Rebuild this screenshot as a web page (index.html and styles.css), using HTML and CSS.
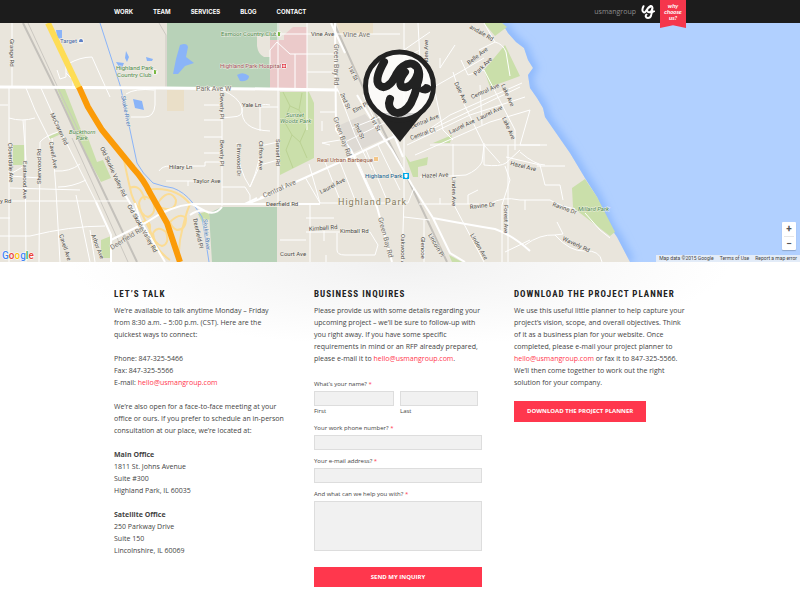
FILE: index.html
```html
<!DOCTYPE html>
<html lang="en">
<head>
<meta charset="utf-8">
<meta name="viewport" content="width=device-width, initial-scale=1">
<title>Contact – usmangroup</title>
<link rel="stylesheet" href="styles.css">
</head>
<body>
<header class="top">
  <div class="wrap top-row">
    <nav class="nav" aria-label="Main">
      <a href="#">WORK</a><a href="#">TEAM</a><a href="#">SERVICES</a><a href="#">BLOG</a><a href="#">CONTACT</a>
    </nav>
    <div class="brand">
      <a class="brand-name" href="#">usmangroup</a>
      <svg class="brand-mark" viewBox="0 0 14 16" aria-hidden="true">
        <path d="M2.500 2.200C1 5 .9 8 3 8.400C5.500 9 6 3 9.500 2C12.500 1.500 12 7.500 8.500 8.300C5 8.500 5.600 3.500 9.200 3M11 5C11 9 10.500 14 7 14C4.500 14 4.200 11.500 5.500 10.500M9 8.300C11 8.300 12 8 13 7.300"/>
      </svg>
      <a class="ribbon" href="#">why<br>choose<br>us?</a>
    </div>
  </div>
</header>

<section class="map" aria-label="Office location map">
  <svg class="map-art" viewBox="0 23 800 239" preserveAspectRatio="xMidYMin slice">
    <defs>
      <filter id="shore" x="-20%" y="-20%" width="140%" height="140%"><feGaussianBlur stdDeviation="4"/></filter>
      <clipPath id="sea"><path d="M502 23L508 33L516 42L524 48L528 60L533 68L528 75L530 88L537 98L543 108L545 117L554 130L570 153L585 178L597 197L610 227L617 237L630 262H800V23Z"/></clipPath>
    </defs>
    <rect class="land" y="23" width="800" height="239"/>
    <!-- water -->
    <g clip-path="url(#sea)">
      <rect class="water" x="495" y="23" width="305" height="239"/>
      <path class="shore" filter="url(#shore)" d="M502 23L508 33L516 42L524 48L528 60L533 68L528 75L530 88L537 98L543 108L545 117L554 130L570 153L585 178L597 197L610 227L617 237L630 262"/>
    </g>
    <!-- parks and grounds -->
    <path class="golf" d="M167 23H279V40H270V88H167ZM222 207H277V262H212L209 213Z"/>
    <path class="land" d="M257 36H270V57H264Q258 54 257 46Z"/>
    <path class="pink" d="M270 40H284V35L293 27H307V88H270Z"/>
    <path class="tan" d="M167 90H184V111H167ZM337 23H373V34H340Z"/>
    <path class="grey" d="M340 125L365 114L386 138L348 155Z"/>
    <path class="park" d="M57 89H65L81 130L88 138L97 162L103 160L111 178L101 182L80 143ZM13 145H24V165H13ZM48 137L59 132L61 134L50 139ZM101 240L111 236V258H101ZM198 214L208 211L210 219L202 222ZM280 92H309L314 103V158L280 175ZM484 23H502L507 27L495 36ZM505 45L520 76L490 87L484 70ZM405 155L410 162L428 157L427 165L418 167V177H413ZM433 143L452 135L450 143ZM585 179L572 188L573 207L580 213L610 236L615 232L597 197ZM449 255L462 262H452Z"/>
    <path class="trail" d="M283 92L290 106L284 121L292 135L286 150L293 168M302 93L299 110L308 124L300 142L307 158M290 106L299 110M292 135L300 142"/>
    <path class="pond" d="M56 30H62L62 38Q58 40 57 36ZM126 51L129 57L127 62L125 58ZM116 62L124 63L121 70ZM146 57L153 59L152 61L147 61ZM180 45Q187 42 188 47L186 57L194 63L185 66L178 74L173 74L176 59ZM237 75Q243 71 249 76Q249 82 240 81ZM133 99L142 101L144 110L135 108Z"/>
    <path class="river" d="M100 23L120 85L130 130L137 163Q142 173 153 183Q165 187 173 188Q184 192 192 202L202 217L209 262"/>
    <!-- railways -->
    <path class="rail" d="M23 23L55 88L78 138L137 262M334 23L355 70L383 130L407 177L447 262"/>
    <path class="rail thin" d="M72 138L128 262M28 23L58 88L82 138M159 23L166 35V88"/>
    <!-- small streets -->
    <path class="st" d="M12 23V87M9 87V262M0 105H8M9 118Q22 122 35 118M26 88L35 110L50 140M23 120L26 160M41 88L58 126L96 202L111 235M40 142L39 262M40 142Q45 136 58 132M25 120L26 262M0 201H130M0 218H10M0 236H30Q70 226 105 226M52 138L56 190L60 262M55 171Q70 172 80 164M58 187Q72 187 86 180M26 165L12 173M10 176L40 178M10 188L80 190M76 195L90 262M90 230L95 262M68 64Q80 57 92 57Q100 75 110 97M57 70L60 79L66 77L66 66M73 87V80L66 73M126 94Q135 88 154 90M155 88V105Q154 117 145 117H131M204 105H222M204 120H222M204 137H222M204 153H222M222 88V206M222 90Q239 97 242 108Q244 117 232 117L222 118M242 108Q240 130 270 131M260 131V108Q260 103 270 105M222 187L245 187L250 195V204M237 143Q238 170 250 187L260 165L278 160M260 141Q262 160 250 187M159 171Q162 166 170 166H205V162H220M166 181H204M188 181V186M278 23V207M278 142L260 146M307 54H336M307 72H336M278 34H400M307 23V88M270 65V50L277 42L290 54H307M295 54V88M260 107H278M307 88V130M320 112H335M322 121V131M309 164L320 203M325 162L340 200M340 162L355 200M320 203H408L414 188M305 177L320 203M310 203V262M306 218H334M306 232H370M337 233V250Q337 255 345 255H375L378 245L370 232M324 231V241M280 240H306M326 255V262M330 145L322 143L340 140M355 155L375 200M366 150L386 198M378 145L400 190M338 90L355 135L372 170M363 95L384 140M352 128L385 115M345 142L390 120M404 23V200L402 262M404 217L430 220M424 220V262M404 50L430 32M418 23L421 80M404 58L420 50M425 92L455 75L484 58M440 58V68L455 45M461 60L468 75L484 70M479 50L495 42Q503 44 506 52L510 76M495 42L484 23M453 72L462 100L484 145L500 163M435 92L443 130L453 140M425 132L450 115L522 83M407 145L470 115L525 97M415 155L490 122L530 110M484 70L515 130L515 150M430 130L520 87M480 85L482 125M420 177H435L466 175Q478 170 482 162M482 162L484 145M453 144V203L484 262M484 143V165Q500 167 506 163L520 150M430 145H547M508 145V262M505 166L510 180L502 205V262M530 110L520 145L540 145M506 157L540 165L545 185H560L563 200M537 166H565M440 198V204M419 204H490Q502 196 520 200H550Q560 206 575 209M468 204V195L478 190M520 152Q535 165 545 165M525 245Q540 234 555 235L563 234L557 222M555 235Q570 252 585 251Q600 250 602 262M505 252L530 240M525 200V210M585 213L600 230L610 238"/>
    <!-- highway ramps -->
    <path class="ramp" d="M124 160Q127 175 130 188Q132 200 140 210L150 230Q155 250 170 260M130 188Q140 183 145 200M145 190Q175 185 190 204Q185 215 180 240L178 262M142 222Q155 218 147 240Q155 250 165 256M160 200Q170 188 176 200Q176 210 166 209Q155 207 160 200M139 203Q142 192 152 200Q158 213 148 217Q140 215 139 203M170 222Q180 212 186 218Q186 230 177 230Q172 228 170 222M153 233Q158 225 166 232Q170 244 162 246Q154 244 153 233"/>
    <!-- main roads -->
    <path class="rd" d="M96 202L111 235V262M111 240L147 222Q170 206 192 204H247L270 195M247 204H320M192 204L205 211Q215 216 222 207M190 215Q200 208 208 212M124 193L165 262M135 203L140 220"/>
    <path class="rd" d="M260 198L340 162L395 136M257 198L245 204M335 23L336 130L351 150L377 207L392 262M331 23L345 53M357 95L376 127L392 150L412 185L433 218L450 253L465 262M392 130L403 157M433 218Q470 225 495 229Q512 235 530 251"/>
    <path class="rd big" d="M0 87L166 88L268 89L338 90"/>
    <path class="hwy yellow" d="M48 23L79 88"/>
    <path class="hwy" d="M79 87L88 107Q94 117 102 130L133 168Q144 180 150 193L167 223L180 262"/>

    <!-- street names -->
    <g class="lbl">
      <text transform="translate(10 39) rotate(90)">Grange Rd</text>
      <text transform="translate(50 114) rotate(65)">McCraren Rd</text>
      <text transform="translate(8 143) rotate(88)">Cloverdale Ave</text>
      <text transform="translate(23 161) rotate(90)">Eastwood Ave</text>
      <text transform="translate(41 184) rotate(-90)">Sherwood Rd</text>
      <text transform="translate(49 142) rotate(80)">Cavell Ave</text>
      <text transform="translate(59 235) rotate(72)">Cavell Ave</text>
      <text transform="translate(91 235) rotate(69)">Arbor Ave</text>
      <text x="0" y="203">y Rd</text>
      <text transform="translate(100 148) rotate(65)">Old Skokie Valley Rd</text>
      <text transform="translate(127 206) rotate(60)">Old Skokie Valley Rd</text>
      <text class="mid" transform="translate(112 250) rotate(-32)">Deerfield Rd</text>
      <text transform="translate(193 219) rotate(78)">Deerfield Pl</text>
      <text class="mid" x="196" y="91">Park Ave W</text>
      <text x="242" y="107">Yale Ln</text>
      <text transform="translate(220 93) rotate(90)">Beverly Pl</text>
      <text transform="translate(220 140) rotate(90)">Beverly Pl</text>
      <text transform="translate(237 144) rotate(90)">Elmwood Dr</text>
      <text transform="translate(259 141) rotate(90)">Clifton Ave</text>
      <text transform="translate(276 139) rotate(90)">Sunset Rd</text>
      <text x="169" y="169">Hilary Ln</text>
      <text x="193" y="183">Taylor Ave</text>
      <text class="mid" transform="translate(264 198) rotate(-24)">Central Ave</text>
      <text transform="translate(321 194) rotate(-28)">Laurel Ave</text>
      <text x="266" y="206">Deerfield Rd</text>
      <text transform="translate(309 231) rotate(-4)">Kimball Rd</text>
      <text x="340" y="233">Kimball Rd</text>
      <text x="280" y="256">Court Ave</text>
      <text x="311" y="36">Vine Ave</text>
      <text class="mid" x="343" y="37">Vine Ave</text>
      <text class="mid" transform="translate(334 44) rotate(90)">Green Bay Rd</text>
      <text class="mid" transform="translate(333 118) rotate(70)">Green Bay Rd</text>
      <text class="mid" transform="translate(378 218) rotate(75)">Green Bay Rd</text>
      <text transform="translate(348 67) rotate(65)">1st St</text>
      <text transform="translate(340 94) rotate(66)">2nd St</text>
      <text transform="translate(370 118) rotate(62)">1st St</text>
      <text transform="translate(354 124) rotate(66)">2nd St</text>
      <text transform="translate(354 113) rotate(-28)">Elm Pl</text>
      <text transform="translate(428 69) rotate(-90)">Linden Ave</text>
      <text transform="translate(469 65) rotate(-38)">Belle Ave</text>
      <text transform="translate(476 76) rotate(-45)">Park Ave</text>
      <text transform="translate(469 28) rotate(30)">andale Rd</text>
      <text transform="translate(454 83) rotate(65)">Dale Ave</text>
      <text transform="translate(472 99) rotate(-24)">Central Ave</text>
      <text transform="translate(411 129) rotate(-22)">Central Ave</text>
      <text transform="translate(411 140) rotate(-20)">Central Ct</text>
      <text transform="translate(450 134) rotate(-25)">Laurel Ave</text>
      <text transform="translate(478 121) rotate(-26)">Laurel Ave</text>
      <text transform="translate(501 85) rotate(66)">Lake Ave</text>
      <text transform="translate(502 118) rotate(66)">Lake Ave</text>
      <text transform="translate(422 178) rotate(-3)">Hazel Ave</text>
      <text transform="translate(510 165) rotate(14)">Hazel Ave</text>
      <text transform="translate(452 177) rotate(90)">Linden Ave</text>
      <text transform="translate(470 235) rotate(60)">Linden Ave</text>
      <text transform="translate(470 209) rotate(-6)">Ravine Dr</text>
      <text transform="translate(552 206) rotate(20)">Ravine Dr</text>
      <text transform="translate(504 205) rotate(90)">Forest Ave</text>
      <text transform="translate(562 240) rotate(25)">Waverly Rd</text>
      <text transform="translate(401 234) rotate(90)">Oakwood A</text>
      <text transform="translate(421 237) rotate(90)">Glencoe</text>
      <text transform="translate(428 235) rotate(60)">Lincoln Pl</text>
    </g>
    <!-- places -->
    <g class="lbl green">
      <text x="221" y="36">Exmoor Country Club</text>
      <text x="116" y="70">Highland Park</text>
      <text x="117" y="77">Country Club</text>
      <text class="it" x="69" y="134">Buckthorn</text>
      <text class="it" x="76" y="140">Park</text>
      <text class="it" x="286" y="117">Sunset</text>
      <text class="it" x="280" y="123">Woods Park</text>
      <text class="it" x="578" y="211">Millard Park</text>
    </g>
    <g class="lbl">
      <text class="target" x="60" y="43">Target</text>
      <text class="hospital" x="220" y="68">Highland Park Hospital</text>
      <text class="food" x="317" y="162">Real Urban Barbeque</text>
      <text class="station" x="365" y="178">Highland Park</text>
      <text class="blue" transform="translate(121 96) rotate(79)">Skokie River</text>
      <text class="blue" transform="translate(203 219) rotate(84)">Skokie River</text>
      <text class="town" x="338" y="205">Highland Park</text>
    </g>
    <circle class="dot" cx="81" cy="41" r="3"/><path fill="#5d80c7" d="M79 42Q79 39 81 39Q83 39 83 42Z"/>
    <circle class="dot" cx="155" cy="72" r="3"/><path class="flag" d="M154 74V70H157L155 71H156V74Z"/>
    <circle class="dot" cx="279" cy="34" r="3"/><path class="flag" d="M278 36V32H281L279 33H280V36Z"/>
    <circle class="dot" cx="284" cy="66" r="3"/><path fill="#e33f4b" d="M282 64H286V68H282Z"/><path fill="#fff" d="M283.600 64.500H284.400V65.600H285.500V66.400H284.400V67.500H283.600V66.400H282.500V65.600H283.600Z"/>
    <circle class="dot" cx="376" cy="159" r="3"/><path stroke="#f19a20" d="M375 157V161M377 157V161"/>
    <rect x="403" y="173" width="6" height="6" fill="#00a9e8"/><path fill="#fff" d="M404.500 174H407.500V177H404.500ZM404.500 178L405.500 177H406.500L407.500 178Z"/>

    <!-- location pin -->
    <path class="ink" d="M377 113L400 142L423 113Z"/>
    <circle class="pin" cx="399.500" cy="86" r="34"/>
    <path class="mono" d="M384 62C379 71 375 80 379 85C384 90 391 85 395 77C399 68 406 62 413 64C420 67 420 75 418 82M405 72C397 82 400 89 407 87C412 85 416 80 418 73M418 70C419 82 415 95 411 103C407 110 400 115 394 112C389 109 388 104 390 99"/>
    <path class="ink" d="M414 89Q422 88 425 84Q430 84 432 88Q430 95 422 93L415 90Z"/>

    <text class="logo" x="2" y="259"><tspan fill="#4285f4">G</tspan><tspan fill="#ea4335">o</tspan><tspan fill="#fbbc05">o</tspan><tspan fill="#4285f4">g</tspan><tspan fill="#34a853">l</tspan><tspan fill="#ea4335">e</tspan></text>
  </svg>
  <div class="zoom"><button type="button" aria-label="Zoom in">+</button><button type="button" aria-label="Zoom out">−</button></div>
  <div class="credits"><span>Map data ©2015 Google</span><a href="#">Terms of Use</a><a href="#">Report a map error</a></div>
</section>

<main class="content">
  <div class="wrap cols">
    <section>
      <h2>LET’S TALK</h2>
      <p>We’re available to talk anytime Monday – Friday<br>from 8:30 a.m. – 5:00 p.m. (CST). Here are the<br>quickest ways to connect:</p>
      <p>Phone: 847-325-5466<br>Fax: 847-325-5566<br>E-mail: <a href="#">hello@usmangroup.com</a></p>
      <p>We’re also open for a face-to-face meeting at your<br>office or ours. If you prefer to schedule an in-person<br>consultation at our place, we’re located at:</p>
      <p><strong>Main Office</strong><br>1811 St. Johns Avenue<br>Suite #300<br>Highland Park, IL 60035</p>
      <p><strong>Satellite Office</strong><br>250 Parkway Drive<br>Suite 150<br>Lincolnshire, IL 60069</p>
    </section>
    <section>
      <h2>BUSINESS INQUIRES</h2>
      <p>Please provide us with some details regarding your<br>upcoming project – we’ll be sure to follow-up with<br>you right away. If you have some specific<br>requirements in mind or an RFP already prepared,<br>please e-mail it to <a href="#">hello@usmangroup.com</a>.</p>
      <form class="form">
        <fieldset class="field">
          <legend>What’s your name? <i>*</i></legend>
          <div class="names">
            <div><input id="first" type="text"><label class="sub" for="first">First</label></div>
            <div><input id="last" type="text"><label class="sub" for="last">Last</label></div>
          </div>
        </fieldset>
        <div class="field"><label for="phone">Your work phone number? <i>*</i></label><input id="phone" type="tel"></div>
        <div class="field"><label for="email">Your e-mail address? <i>*</i></label><input id="email" type="email"></div>
        <div class="field"><label for="msg">And what can we help you with? <i>*</i></label><textarea id="msg"></textarea></div>
        <button class="btn send" type="button">SEND MY INQUIRY</button>
      </form>
    </section>
    <section>
      <h2>DOWNLOAD THE PROJECT PLANNER</h2>
      <p>We use this useful little planner to help capture your<br>project’s vision, scope, and overall objectives. Think<br>of it as a business plan for your website. Once<br>completed, please e-mail your project planner to<br><a href="#">hello@usmangroup.com</a> or fax it to 847-325-5566.<br>We’ll then come together to work out the right<br>solution for your company.</p>
      <a class="btn" href="#">DOWNLOAD THE PROJECT PLANNER</a>
    </section>
  </div>
</main>
</body>
</html>
```
FILE: styles.css
```css
* { box-sizing: border-box; }
body { margin: 0; background: #fff; color: #444; font: 7px/12px "Open Sans", "Noto Sans", sans-serif; }
a { color: #ff374d; text-decoration: none; }
.wrap { max-width: 572px; margin: 0 auto; }

/* header */
.top { background: #1c1c1c; height: 23px; position: relative; z-index: 2; }
.top-row { display: flex; justify-content: space-between; }
.nav { display: flex; gap: 20px; }
.nav a { color: #fff; font: bold 6px/23px Inter, sans-serif; }
.brand { display: flex; align-items: flex-start; gap: 5px; }
.brand-name { color: #8c8c8c; font: 7px/23px "Open Sans", sans-serif; }
.brand-mark { width: 14px; height: 16px; margin-top: 4px; fill: none; stroke: #fff; stroke-width: 2; stroke-linecap: round; }
.ribbon { width: 26px; height: 28px; padding-top: 3px; background: #f5364c; color: #fff; font: italic bold 6px/6px Lato, sans-serif; text-align: center; clip-path: polygon(0 0, 100% 0, 100% 100%, 50% 90%, 0 100%); }

/* map */
.map { position: relative; height: 239px; background: #b1d0ff; }
.map-art { display: block; width: 100%; height: 100%; font-family: Roboto, sans-serif; }
.land { fill: #e9e5dc; }
.water { fill: #b1d0ff; }
.shore { fill: none; stroke: #86b4fc; stroke-width: 8; }
.golf { fill: #b8d2b8; }
.pink { fill: #ebcaca; }
.tan { fill: #eadfc8; }
.grey { fill: #dedad4; }
.park { fill: #cadfaa; }
.trail { fill: none; stroke: #bbd293; }
.pond { fill: #8ab4f8; }
.river { fill: none; stroke: #8ab4f8; }
.rail { fill: none; stroke: #c4c1bb; stroke-width: 2; }
.rail.thin { stroke-width: 1; stroke: #cbc8c1; }
.st { fill: none; stroke: #fff; stroke-width: 1; stroke-linejoin: round; }
.rd { fill: none; stroke: #fff; stroke-width: 2; stroke-linejoin: round; }
.rd.big { stroke-width: 3; }
.ramp { fill: none; stroke: #fbdc94; stroke-width: 2; }
.hwy { fill: none; stroke: #fb9b08; stroke-width: 6; }
.hwy.yellow { stroke: #fedd55; }
.lbl { font-size: 6px; fill: #4c4a46; stroke: #f4f1ea; stroke-width: 1; paint-order: stroke; stroke-opacity: .8; }
.mid { font-size: 7px; fill: #77736c; }
.green { fill: #4c8a4c; }
.it { font-style: italic; }
.target { fill: #4a68a6; }
.hospital { fill: #a3545c; }
.food { fill: #98583f; }
.station { fill: #10608f; }
.blue { fill: #4c7cba; font-style: italic; }
.town { font-size: 9px; letter-spacing: 1px; fill: #857b5b; }
.dot { fill: #f5f2ef; }
.flag { fill: #79b943; }
.ink { fill: #222; }
.pin { fill: #fff; fill-opacity: .8; stroke: #222; stroke-width: 5; }
.mono { fill: none; stroke: #222; stroke-width: 8; stroke-linecap: round; }
.logo { font: 500 10px Roboto, sans-serif; stroke: #fff; stroke-width: 1; paint-order: stroke; }
.zoom { position: absolute; right: 4px; bottom: 12px; width: 14px; padding: 0 2px; background: #fff; border-radius: 1px; box-shadow: 0 1px 1px #0003; }
.zoom button { display: block; width: 100%; height: 14px; padding: 0; border: 0; background: none; color: #555; font: bold 10px/14px Roboto, sans-serif; }
.zoom button + button { border-top: 1px solid #e6e6e6; }
.credits { position: absolute; right: 0; bottom: 0; display: flex; background: #f5f5f5bb; font: 5px/7px Roboto, sans-serif; }
.credits > * { padding: 0 3px; color: #444; }

/* content */
.content { padding: 26px 0; background: radial-gradient(ellipse 330px 84px at 50% 0, #f1f1f1, #fff) no-repeat; }
.cols { display: grid; grid-template-columns: repeat(3, 1fr); gap: 28px; }
h2 { margin: 0 0 5px; color: #222; font: bold 9px/12px "Roboto Condensed", "Open Sans Condensed", Lato, sans-serif; letter-spacing: 1px; white-space: nowrap; }
p { margin: 0 0 12px; white-space: nowrap; }
.form { width: 168px; margin-top: 14px; font-size: 6px; line-height: 10px; }
.field { margin: 0 0 6px; padding: 0; border: 0; }
.field label, legend { display: block; padding: 0; margin: 0 0 2px; }
.field i { color: #ff374d; font-style: normal; }
.names { display: grid; grid-template-columns: 80px 78px; gap: 6px; }
.field .sub { margin: 0; line-height: 11px; }
input, textarea { display: block; width: 100%; height: 15px; padding: 2px; border: 1px solid #ddd; border-radius: 0; background: #f1f1f1; font: inherit; }
textarea { height: 50px; resize: none; }
.btn { display: inline-block; padding: 0 13px; border: 0; background: #ff374d; color: #fff; font: bold 6px/21px "Open Sans", sans-serif; white-space: nowrap; }
.send { display: block; width: 100%; margin-top: 16px; padding: 0; line-height: 20px; }
```
